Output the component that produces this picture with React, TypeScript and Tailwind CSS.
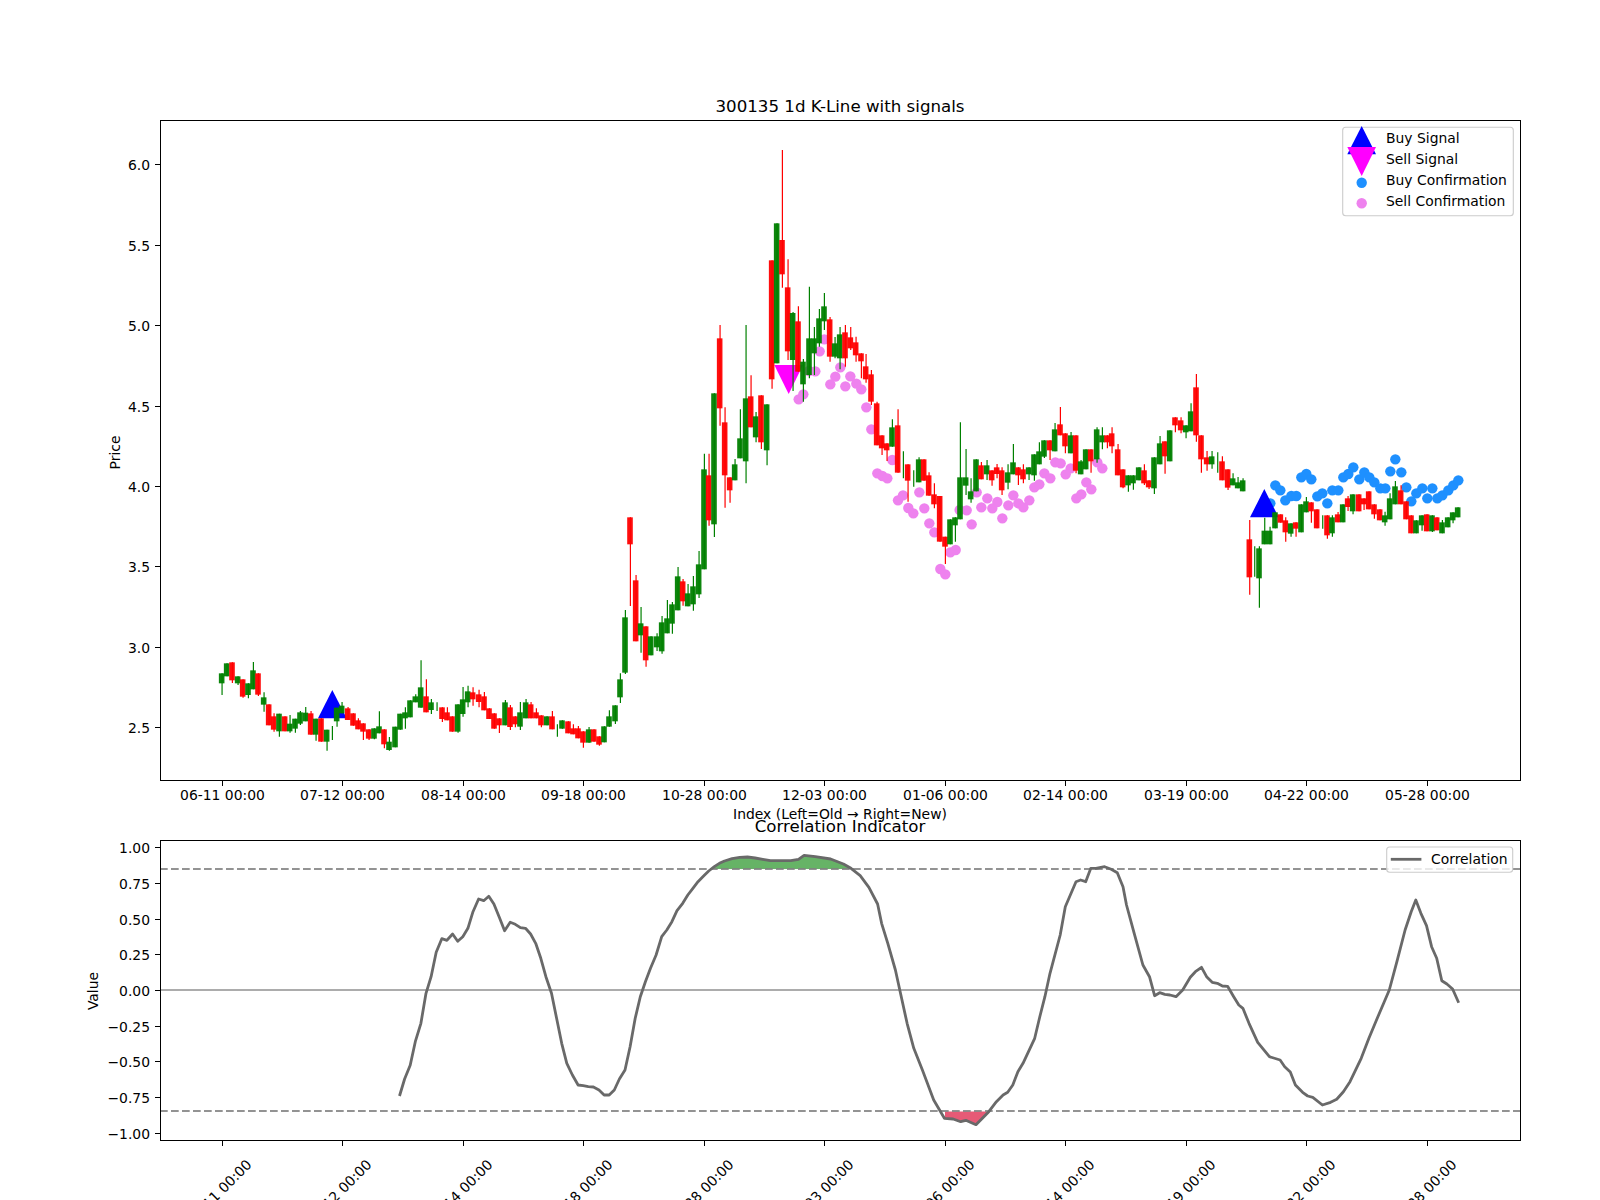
import React from 'react';

type Row = [number, 'g' | 'r', number, number, number?, number?];
type Segment = { ox: number; oy: number; rows: Row[] };

const GREEN = '#008000';
const RED = '#ff0000';
const VIOLET = '#ee82ee';
const BLUE = '#1e90ff';

// candles read off crops, each list is in 3x coords from its own origin
// [x, colour, bodyTop, bodyBottom, wickTop, wickBottom], body 0,0 = wick only
const segments: Segment[] = [
  {
    ox: 150,
    oy: 600,
    rows: [
      [215, 'g', 220, 250, 220, 285], [230, 'g', 190, 229], [246, 'r', 187, 241, 187, 249], [263, 'g', 229, 250, 229, 255],
      [278, 'r', 238, 290, 238, 293], [294, 'g', 250, 285, 250, 295], [309, 'g', 211, 268, 186, 268], [324, 'r', 220, 284, 220, 288],
      [341, 'g', 292, 314, 277, 335], [356, 'r', 313, 376], [371, 'r', 349, 389, 340, 395], [387, 'g', 341, 394, 341, 410],
      [404, 'r', 349, 394], [419, 'g', 371, 394, 345, 398], [435, 'g', 356, 386, 356, 398], [450, 'g', 337, 371, 333, 375],
      [466, 'g', 338, 364, 321, 364], [482, 'r', 340, 404, 333, 404], [497, 'g', 356, 404, 356, 422], [513, 'r', 355, 425],
      [530, 'g', 389, 425, 389, 452], [546, 'g', 0, 0, 378, 420], [560, 'g', 323, 364, 323, 380], [575, 'g', 317, 340, 306, 340],
      [593, 'r', 325, 360, 321, 360], [609, 'r', 340, 377], [624, 'r', 361, 388, 355, 388], [639, 'r', 370, 395, 370, 420],
      [656, 'r', 388, 416, 388, 420], [672, 'g', 385, 416, 385, 418], [687, 'g', 379, 400, 334, 400], [702, 'r', 388, 433, 388, 445],
      [717, 'g', 425, 450, 411, 452], [735, 'g', 380, 442], [750, 'g', 341, 389], [765, 'g', 337, 355, 322, 386],
      [780, 'g', 301, 352], [796, 'g', 289, 307, 283, 307], [812, 'g', 262, 323, 181, 323], [828, 'r', 289, 337, 238, 337],
      [843, 'g', 307, 330, 297, 342], [860, 'g', 0, 0, 307, 333], [876, 'r', 322, 357, 322, 366], [891, 'r', 337, 361, 322, 361],
      [906, 'r', 349, 395], [923, 'g', 313, 395, 313, 398], [938, 'g', 298, 342, 261, 350], [953, 'g', 274, 307, 257, 322],
      [968, 'r', 277, 298, 262, 317], [986, 'r', 283, 306, 269, 322], [1002, 'r', 289, 331, 276, 331], [1017, 'r', 325, 357],
      [1032, 'r', 340, 386], [1047, 'r', 355, 376, 355, 399], [1065, 'g', 307, 376, 300, 376], [1080, 'r', 322, 381, 315, 390],
      [1095, 'r', 349, 373, 349, 382], [1110, 'g', 337, 380, 306, 390], [1127, 'g', 307, 355, 297, 355], [1142, 'r', 313, 355, 306, 355],
      [1158, 'r', 337, 355, 325, 355], [1173, 'r', 346, 376, 346, 382], [1190, 'g', 349, 376], [1206, 'r', 349, 388, 333, 388],
      [1221, 'g', 0, 0, 373, 410], [1236, 'g', 361, 386], [1254, 'r', 364, 400], [1269, 'r', 385, 403, 373, 403],
      [1284, 'r', 385, 415, 378, 415], [1299, 'r', 394, 428, 394, 443], [1316, 'g', 388, 428, 381, 428], [1331, 'r', 388, 425],
      [1347, 'r', 409, 434, 409, 437], [1362, 'g', 379, 427], [1377, 'g', 349, 380, 331, 380], [1395, 'g', 316, 364, 316, 372],
      [1410, 'g', 238, 292, 220, 309], [1425, 'g', 52, 218, 30, 222],
    ],
  },
  {
    ox: 600,
    oy: 480,
    rows: [
      [90, 'r', 112, 193, 112, 378], [107, 'r', 301, 484, 285, 484], [122, 'g', 430, 466, 381, 518], [137, 'r', 439, 541, 439, 560],
      [152, 'g', 469, 526], [170, 'g', 469, 502, 460, 513], [185, 'g', 427, 514, 408, 521], [201, 'g', 415, 460, 360, 460],
      [216, 'g', 373, 431, 366, 461], [233, 'g', 289, 391, 261, 391], [248, 'r', 304, 364, 297, 377], [263, 'g', 340, 379, 312, 379],
      [279, 'g', 319, 373, 288, 392], [296, 'g', 253, 343, 213, 354],
    ],
  },
  {
    ox: 600,
    oy: 290,
    rows: [
      [312, 'g', 538, 838, 491, 838], [326, 'r', 556, 691, 491, 707], [342, 'g', 310, 703, 310, 741], [359, 'r', 145, 355, 105, 407],
      [374, 'r', 397, 556, 352, 653], [389, 'r', 562, 601, 562, 638], [404, 'g', 523, 571, 507, 571], [420, 'g', 445, 505, 358, 505],
      [437, 'g', 325, 514, 105, 580], [452, 'r', 319, 412, 256, 412], [467, 'g', 379, 442, 366, 457], [483, 'r', 316, 457, 316, 477],
      [500, 'g', 343, 481, 343, 526],
    ],
  },
  {
    ox: 600,
    oy: 130,
    rows: [
      [515, 'r', 391, 748, 391, 776], [530, 'g', 280, 700], [546, 'r', 330, 433, 60, 473], [563, 'r', 472, 664, 388, 690],
      [578, 'g', 549, 690, 546, 783], [594, 'r', 574, 725, 529, 725], [609, 'g', 695, 763, 687, 815], [627, 'g', 625, 735, 470, 745],
      [642, 'g', 625, 670, 591, 735], [657, 'g', 565, 640, 537, 650], [672, 'g', 529, 574, 489, 600], [689, 'r', 568, 680, 561, 695],
      [704, 'g', 640, 680, 621, 685], [719, 'g', 613, 685, 591, 718], [735, 'r', 607, 685, 585, 710], [751, 'r', 622, 655, 591, 660],
      [767, 'r', 637, 676, 620, 695], [783, 'r', 670, 694, 670, 745], [797, 'r', 709, 748, 672, 758], [813, 'r', 733, 815, 720, 825],
    ],
  },
  {
    ox: 600,
    oy: 290,
    rows: [
      [830, 'r', 340, 466, 335, 466], [845, 'r', 436, 475, 436, 495], [860, 'r', 460, 481, 460, 513], [876, 'g', 412, 470, 388, 470],
      [893, 'r', 406, 548, 358, 548], [909, 'g', 0, 0, 484, 565], [923, 'r', 523, 572, 523, 635], [940, 'g', 0, 0, 541, 590],
      [956, 'g', 508, 577, 502, 577], [971, 'r', 508, 572], [986, 'r', 556, 617, 547, 617], [1002, 'r', 613, 643, 580, 655],
    ],
  },
  {
    ox: 900,
    oy: 400,
    rows: [
      [119, 'r', 288, 425], [135, 'r', 410, 440, 410, 492], [150, 'g', 358, 433], [165, 'g', 352, 376, 352, 425],
      [180, 'g', 232, 358, 67, 358], [197, 'g', 232, 257, 147, 285], [212, 'g', 274, 298, 235, 308], [228, 'g', 178, 274],
      [243, 'r', 196, 238, 186, 238], [260, 'g', 196, 223, 180, 240], [275, 'r', 211, 241, 211, 257], [290, 'r', 202, 222, 192, 235],
      [305, 'r', 211, 271, 202, 285], [323, 'g', 217, 248, 193, 268], [339, 'g', 187, 223, 132, 223], [354, 'r', 202, 226, 202, 255],
      [369, 'r', 208, 238, 193, 250], [386, 'g', 202, 223, 202, 240], [402, 'g', 163, 226, 163, 242], [417, 'g', 154, 193, 127, 193],
      [432, 'g', 121, 170, 121, 174], [449, 'r', 121, 151, 121, 180], [464, 'g', 88, 154, 69, 154], [480, 'r', 73, 106, 21, 106],
      [495, 'r', 100, 139, 100, 160], [512, 'g', 106, 160, 96, 160], [527, 'r', 106, 212, 106, 220], [542, 'g', 184, 223, 180, 223],
      [557, 'g', 148, 208], [572, 'r', 148, 184, 148, 218], [590, 'g', 88, 178, 82, 188], [606, 'g', 106, 127, 82, 148],
      [621, 'r', 106, 127, 106, 145], [635, 'r', 100, 139, 82, 160], [653, 'r', 148, 226, 132, 226], [668, 'r', 208, 262, 208, 265],
      [684, 'g', 226, 256, 226, 275], [699, 'g', 226, 250, 226, 269], [716, 'g', 202, 241], [732, 'r', 211, 250, 193, 255],
      [746, 'r', 241, 262, 241, 267], [762, 'g', 172, 265, 172, 282], [779, 'g', 130, 193, 108, 193], [794, 'r', 124, 169, 124, 221],
    ],
  },
  {
    ox: 1150,
    oy: 360,
    rows: [
      [59, 'g', 211, 304], [75, 'r', 172, 196, 172, 217], [92, 'r', 181, 211, 172, 220], [107, 'g', 196, 217, 196, 235],
      [122, 'g', 154, 214, 130, 214], [138, 'r', 82, 226, 42, 245], [153, 'r', 226, 298, 226, 338], [170, 'r', 292, 313, 273, 332],
      [185, 'g', 289, 313, 273, 326], [202, 'g', 0, 0, 277, 338], [216, 'r', 304, 361, 289, 361], [233, 'r', 328, 383, 328, 390],
      [248, 'g', 355, 376, 340, 376], [263, 'g', 367, 385, 351, 385], [278, 'g', 361, 394, 355, 394], [298, 'r', 538, 652, 480, 704],
      [313, 'g', 0, 0, 559, 650], [327, 'g', 565, 655, 559, 743], [343, 'g', 512, 553, 473, 553], [359, 'g', 512, 553, 500, 553],
      [375, 'g', 457, 505], [391, 'r', 463, 488], [406, 'r', 481, 517, 472, 545], [422, 'g', 490, 521, 490, 530],
      [437, 'r', 487, 506, 487, 530], [453, 'g', 433, 517], [468, 'g', 424, 457, 411, 457], [483, 'r', 427, 454, 427, 488],
      [500, 'r', 448, 505], [517, 'g', 0, 0, 466, 506], [531, 'r', 466, 526, 466, 536], [546, 'g', 472, 520, 466, 530],
      [563, 'r', 463, 487, 456, 487], [578, 'g', 433, 487], [593, 'r', 415, 441, 408, 453], [608, 'g', 403, 454, 403, 463],
      [626, 'r', 403, 454], [641, 'r', 415, 433, 415, 450], [656, 'r', 394, 448], [672, 'r', 433, 463, 433, 476],
      [689, 'r', 448, 481], [704, 'g', 466, 487, 455, 497], [719, 'g', 415, 478, 400, 478], [735, 'g', 379, 433, 363, 433],
      [752, 'r', 391, 433, 376, 433], [768, 'r', 424, 478], [783, 'r', 466, 520], [798, 'g', 481, 520],
      [815, 'g', 466, 496, 466, 512], [830, 'r', 463, 514], [846, 'g', 466, 514, 466, 516], [860, 'r', 472, 511],
      [876, 'g', 487, 520, 480, 520], [893, 'g', 472, 502], [908, 'g', 457, 481, 457, 490], [923, 'g', 442, 472],
    ],
  },
];

const candles = segments.flatMap(({ ox, oy, rows }) =>
  rows.map(([x, c, bt, bb, wt, wb]) => ({
    x: ox + x / 3,
    color: c === 'g' ? GREEN : RED,
    bodyTop: oy + bt / 3,
    bodyBottom: oy + bb / 3,
    wickTop: oy + (wt ?? bt) / 3,
    wickBottom: oy + (wb ?? bb) / 3,
    hasBody: bb > 0,
  }))
);

const sellDots = [
  [596, 328], [610, 313], [627, 243], [646, 244], [659, 184], [673, 148], [691, 283], [706, 260], [721, 232], [736, 289],
  [751, 259], [769, 281], [784, 298], [799, 352], [814, 418], [832, 550], [847, 558], [862, 565], [877, 510], [894, 631],
  [909, 616], [925, 654], [940, 670], [958, 607], [973, 655], [988, 700], [1003, 727], [1021, 837], [1036, 853], [1051, 787],
  [1067, 780], [1079, 660], [1100, 661], [1115, 703], [1130, 607], [1144, 652], [1162, 625], [1177, 655], [1192, 636], [1207, 685],
  [1225, 646], [1240, 616], [1255, 640], [1270, 652], [1288, 631], [1303, 592], [1318, 583], [1333, 550], [1351, 565], [1366, 517],
  [1382, 520], [1397, 553], [1412, 535], [1429, 625], [1444, 613], [1459, 577], [1474, 598], [1492, 517], [1507, 535],
].map(([x, y]) => [600 + x / 3, 290 + y / 3]);

const buyDots = [
  [361, 430], [376, 376], [391, 391], [406, 421], [424, 408], [439, 408], [454, 352], [469, 342], [484, 358], [502, 409],
  [517, 400], [532, 430], [547, 391], [565, 391], [580, 352], [595, 342], [610, 322], [628, 358], [643, 337], [658, 352],
  [673, 367], [691, 385], [706, 385], [721, 334], [736, 298], [754, 337], [769, 382], [784, 424], [799, 400], [817, 385],
  [832, 415], [847, 385], [862, 415], [877, 406], [895, 391], [910, 376], [925, 361],
].map(([x, y]) => [1150 + x / 3, 360 + y / 3]);

const corrLeft = [
  [783, 948], [793, 897], [804, 856], [814, 785], [825, 730], [835, 640], [845, 590], [855, 517], [866, 476], [876, 481],
  [887, 462], [897, 484], [907, 470], [917, 445], [927, 395], [938, 357], [948, 362], [958, 349], [968, 372], [979, 413],
  [989, 452], [1000, 427], [1010, 433], [1020, 443], [1030, 445], [1040, 462], [1050, 490], [1060, 535], [1070, 590], [1081, 640],
  [1091, 715], [1101, 790], [1111, 850], [1122, 885], [1133, 915], [1143, 917], [1153, 920], [1163, 921], [1174, 930], [1184, 945],
  [1194, 945], [1204, 930], [1214, 897], [1225, 870], [1235, 800], [1245, 715], [1255, 650], [1265, 605], [1275, 565], [1286, 525],
  [1297, 470], [1307, 450], [1317, 425], [1327, 392], [1338, 370], [1348, 345], [1358, 325], [1368, 305], [1379, 288], [1389, 273],
  [1400, 260], [1410, 250], [1420, 243], [1435, 236], [1450, 232], [1465, 231], [1480, 234], [1495, 238], [1510, 242], [1530, 242],
  [1550, 242], [1565, 238],
].map(([x, y]) => [x / 1.96, 780 + y / 3]);

const corrRight = [
  [8, 226], [30, 230], [60, 237], [85, 252], [100, 265], [118, 287], [135, 322], [152, 372], [160, 430], [172, 490],
  [187, 570], [197, 640], [210, 730], [223, 805], [240, 870], [262, 960], [283, 1015], [300, 1017], [315, 1025], [325, 1021],
  [345, 1034], [370, 995], [385, 965], [398, 945], [407, 937], [417, 915], [427, 875], [437, 850], [460, 775], [470, 710],
  [480, 650], [490, 580], [510, 465], [520, 380], [541, 305], [550, 300], [560, 305], [570, 265], [580, 265], [597, 260],
  [610, 268], [622, 278], [633, 320], [640, 375], [655, 460], [672, 555], [685, 590], [695, 647], [705, 638], [715, 643],
  [725, 645], [737, 650], [750, 630], [765, 592], [775, 575], [787, 562], [797, 590], [808, 607], [818, 610], [828, 618],
  [838, 619], [850, 650], [860, 675], [868, 685], [880, 730], [897, 787], [920, 830], [941, 840], [950, 860], [961, 876],
  [971, 915], [985, 937], [995, 948], [1005, 952], [1024, 975], [1040, 967], [1052, 958], [1065, 935], [1078, 905], [1100, 835],
  [1115, 775], [1130, 720], [1155, 630], [1170, 545], [1186, 450], [1198, 395], [1207, 360], [1217, 400], [1228, 437], [1238, 500],
  [1248, 535], [1258, 602], [1268, 612], [1279, 627], [1291, 668],
].map(([x, y]) => [800 + x / 1.96, 780 + y / 3]);

const corrLine = [...corrLeft, ...corrRight];
const pts = (list: number[][]) => list.map(([x, y]) => `${x.toFixed(1)},${y.toFixed(1)}`).join(' ');

const HIGH_Y = 869;
const LOW_Y = 1111;
const greenFill = corrLine.filter(([x]) => x >= 714 && x <= 851);
const redFill = corrLine.filter(([x]) => x >= 945 && x <= 989);

const xTicks = [
  [222.5, '06-11 00:00'], [342.5, '07-12 00:00'], [463.5, '08-14 00:00'], [583.5, '09-18 00:00'], [704.5, '10-28 00:00'], [824.5, '12-03 00:00'],
  [945.5, '01-06 00:00'], [1065.5, '02-14 00:00'], [1186.5, '03-19 00:00'], [1306.5, '04-22 00:00'], [1427.5, '05-28 00:00'],
] as [number, string][];

const priceTicks = ['6.0', '5.5', '5.0', '4.5', '4.0', '3.5', '3.0', '2.5'].map(
  (label, i) => [Math.floor(164.7 + i * 80.45) + 0.5, label] as [number, string]
);
const corrTicks = ['1.00', '0.75', '0.50', '0.25', '0.00', '−0.25', '−0.50', '−0.75', '−1.00'].map(
  (label, i) => [Math.floor(847.7 + i * 35.7) + 0.5, label] as [number, string]
);

function YAxis({ ticks }: { ticks: [number, string][] }) {
  return (
    <>
      {ticks.map(([y, label]) => (
        <g key={label}>
          <line x1={155} x2={160} y1={y} y2={y} stroke="black" strokeWidth={1} shapeRendering="crispEdges" />
          <text x={150} y={y + 5} textAnchor="end" className="text-[13.9px]">
            {label}
          </text>
        </g>
      ))}
    </>
  );
}

function PriceChart() {
  return (
    <svg viewBox="0 0 1600 820" className="block w-[1600px] h-[820px] overflow-visible shrink-0">
      <text x={840} y={111.7} textAnchor="middle" className="text-[16.67px]">
        300135 1d K-Line with signals
      </text>

      {sellDots.map(([x, y], i) => (
        <circle key={i} cx={x} cy={y} r={5.2} fill={VIOLET} />
      ))}
      {buyDots.map(([x, y], i) => (
        <circle key={i} cx={x} cy={y} r={5.2} fill={BLUE} />
      ))}
      <polygon points="332.3,690 318,718.3 346.7,718.3" fill="#0000ff" />
      <polygon points="1264.3,489 1250,517.3 1278.7,517.3" fill="#0000ff" />
      <polygon points="774.3,365 803,365 788.7,394" fill="#ff00ff" />

      {candles.map((c, i) => (
        <g key={i}>
          <line x1={c.x + 0.4} x2={c.x + 0.4} y1={c.wickTop} y2={c.wickBottom} stroke={c.color} strokeWidth={1.2} />
          {c.hasBody && <rect x={c.x - 2.8} y={c.bodyTop} width={5.6} height={c.bodyBottom - c.bodyTop} fill={c.color} fillOpacity={0.95} />}
        </g>
      ))}

      <rect x={160.5} y={120.5} width={1360} height={660} fill="none" stroke="black" strokeWidth={1} shapeRendering="crispEdges" />
      <YAxis ticks={priceTicks} />
      {xTicks.map(([x, label]) => (
        <g key={label}>
          <line x1={x} x2={x} y1={781} y2={786} stroke="black" strokeWidth={1} shapeRendering="crispEdges" />
          <text x={x} y={800} textAnchor="middle" className="text-[13.9px]">
            {label}
          </text>
        </g>
      ))}
      <text x={840} y={819} textAnchor="middle" className="text-[13.9px]">
        Index (Left=Old → Right=New)
      </text>
      <text transform="translate(120 452.5) rotate(-90)" textAnchor="middle" className="text-[13.9px]">
        Price
      </text>

      <rect x={1342.7} y={127.3} width={170.6} height={88.4} rx={3} fill="white" fillOpacity={0.8} stroke="#cccccc" strokeWidth={1.1} />
      <polygon points="1361.7,126 1347.3,154.3 1376,154.3" fill="#0000ff" />
      <polygon points="1347.3,147 1376,147 1361.7,176" fill="#ff00ff" />
      <circle cx={1361.7} cy={182.7} r={5.2} fill={BLUE} />
      <circle cx={1361.7} cy={203.3} r={5.2} fill={VIOLET} />
      <text x={1386} y={143.3} className="text-[13.9px]">Buy Signal</text>
      <text x={1386} y={164.3} className="text-[13.9px]">Sell Signal</text>
      <text x={1386} y={185.3} className="text-[13.9px]">Buy Confirmation</text>
      <text x={1386} y={206.3} className="text-[13.9px]">Sell Confirmation</text>
    </svg>
  );
}

function CorrelationChart() {
  return (
    <svg viewBox="0 820 1600 380" className="block w-[1600px] h-[380px] overflow-visible shrink-0">
      <text x={840} y={831.7} textAnchor="middle" className="text-[16.67px]">
        Correlation Indicator
      </text>

      <polygon points={`714,${HIGH_Y} ${pts(greenFill)} 851,${HIGH_Y}`} fill="#008000" fillOpacity={0.6} />
      <polygon points={`945,${LOW_Y + 0.5} 945,1118.5 ${pts(redFill)} 989,${LOW_Y + 0.5}`} fill="#dc143c" fillOpacity={0.7} />

      <line x1={160} x2={1520} y1={990} y2={990} stroke="#808080" strokeOpacity={0.65} strokeWidth={2.1} />
      <line x1={160} x2={1520} y1={HIGH_Y} y2={HIGH_Y} stroke="#808080" strokeOpacity={0.85} strokeWidth={2.1} strokeDasharray="7.7 3.3" />
      <line x1={160} x2={1520} y1={LOW_Y} y2={LOW_Y} stroke="#808080" strokeOpacity={0.85} strokeWidth={2.1} strokeDasharray="7.7 3.3" />
      <polyline points={pts(corrLine)} fill="none" stroke="#696969" strokeWidth={2.8} strokeLinejoin="round" />

      <rect x={160.5} y={840.5} width={1360} height={300} fill="none" stroke="black" strokeWidth={1} shapeRendering="crispEdges" />
      <YAxis ticks={corrTicks} />
      {xTicks.map(([x, label]) => (
        <g key={label}>
          <line x1={x} x2={x} y1={1141} y2={1146} stroke="black" strokeWidth={1} shapeRendering="crispEdges" />
          <text transform={`translate(${x} 1195.5) rotate(-45)`} textAnchor="middle" className="text-[13.9px]">
            {label}
          </text>
        </g>
      ))}
      <text transform="translate(98 991) rotate(-90)" textAnchor="middle" className="text-[13.9px]">
        Value
      </text>

      <rect x={1386.7} y={847} width={126} height={25.3} rx={3} fill="white" fillOpacity={0.8} stroke="#cccccc" strokeWidth={1.1} />
      <line x1={1390.8} x2={1421.4} y1={859.3} y2={859.3} stroke="#696969" strokeWidth={2.8} />
      <text x={1431} y={864} className="text-[13.9px]">Correlation</text>
    </svg>
  );
}

export default function App() {
  return (
    <div className="w-[1600px] h-[1200px] overflow-hidden bg-white flex flex-col font-['DejaVu_Sans',sans-serif]">
      <PriceChart />
      <CorrelationChart />
    </div>
  );
}
